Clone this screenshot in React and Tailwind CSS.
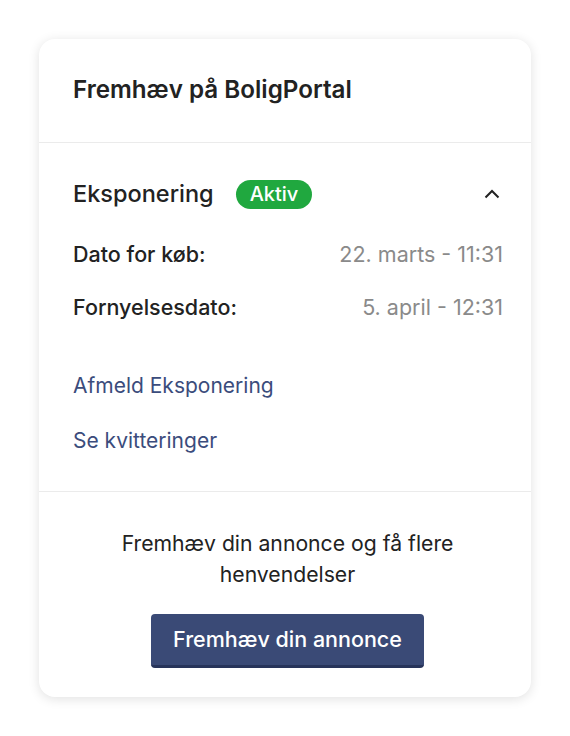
export default function App() {
  return (
    <div className="min-h-screen bg-white p-[39px]" style={{ fontFamily: 'Inter, "Noto Sans", sans-serif' }}>
      <div className="rounded-[16px] bg-white shadow-[0_2px_12px_rgba(0,0,0,0.12)] overflow-hidden">
        {/* Header */}
        <div className="px-[34px] pt-[37px] pb-[38px] border-b border-[#ebebeb]">
          <h2 className="text-[24.2px] leading-[28px] font-semibold text-[#222]">Fremhæv på BoligPortal</h2>
        </div>

        {/* Eksponering */}
        <div className="pl-[34px] pr-[28px] pt-[35px] pb-[34px] border-b border-[#ebebeb]">
          <div className="flex items-center h-[32px]">
            <span className="text-[23.5px] font-medium text-[#222]">Eksponering</span>
            <span className="ml-[22px] rounded-full bg-[#20a83f] px-[14px] h-[29px] flex items-center text-[20px] font-medium text-white">Aktiv</span>
            <svg className="ml-auto mr-[3px]" width="16" height="10" viewBox="0 0 16 10" fill="none">
              <path d="M1.5 8.5 L8 2 L14.5 8.5" stroke="#222" strokeWidth="2" />
            </svg>
          </div>
          <div className="mt-[28px] flex items-center justify-between h-[32px]">
            <span className="text-[21.5px] font-medium text-[#222]">Dato for køb:</span>
            <span className="text-[21.5px] text-[#8a8a8a]">22. marts - 11:31</span>
          </div>
          <div className="mt-[21px] flex items-center justify-between h-[32px]">
            <span className="text-[21.5px] font-medium text-[#222]">Fornyelsesdato:</span>
            <span className="text-[21.5px] text-[#8a8a8a]">5. april - 12:31</span>
          </div>
          <div className="mt-[47px] flex flex-col gap-[23px]">
            <a className="text-[21px] leading-[32px] text-[#3b4c7c]">Afmeld Eksponering</a>
            <a className="text-[21px] leading-[32px] text-[#3b4c7c]">Se kvitteringer</a>
          </div>
        </div>

        {/* Footer */}
        <div className="pl-[39px] pr-[34px] pt-[36px] pb-[29px] flex flex-col items-center">
          <p className="text-[21.2px] leading-[31px] text-[#222] text-center max-w-[380px]">
            Fremhæv din annonce og få flere henvendelser
          </p>
          <button className="mt-[24px] h-[54px] w-[273px] rounded-[4px] bg-[#3a4a76] border-b-[3px] border-[#27345a] text-white text-[21.5px] font-medium">
            Fremhæv din annonce
          </button>
        </div>
      </div>
    </div>
  )
}
